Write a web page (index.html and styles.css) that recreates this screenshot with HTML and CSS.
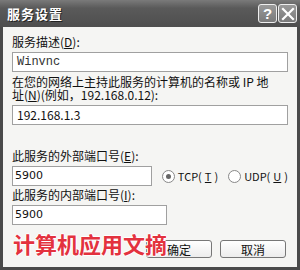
FILE: index.html
```html
<!DOCTYPE html>
<html lang="zh-CN">
<head>
    <meta charset="UTF-8">
    <title>服务设置</title>
    <link rel="stylesheet" href="styles.css">
</head>
<body>

    <div class="window">
        <div class="titlebar">
            <span class="title">服务设置</span>
            <div class="caption-buttons">
                <span class="cap-btn">?</span>
                <span class="cap-btn close">
                    <svg width="14" height="14" viewBox="0 0 14 14">
                        <path d="M2 2 L12 12 M12 2 L2 12" stroke="#fff" stroke-width="2.2" stroke-linecap="square"/>
                    </svg>
                </span>
            </div>
        </div>

        <div class="content">
            <div class="label">服务描述(<u>D</u>):</div>
            <div class="field wide mono">Winvnc</div>

            <div class="label two-line">在您的网络上主持此服务的计算机的名称或 IP 地</div>
            <div class="label second-line">址(<u>N</u>)(例如，192.168.0.12):</div>
            <div class="field wide">192.168.1.3</div>

            <div class="label gap-top">此服务的外部端口号(<u>E</u>):</div>
            <div class="port-row">
                <div class="field short sans">5900</div>
                <label class="radio"><span class="dot checked"></span>TCP(<u>T</u>)</label>
                <label class="radio"><span class="dot"></span>UDP(<u>U</u>)</label>
            </div>

            <div class="label">此服务的内部端口号(<u>I</u>):</div>
            <div class="field short sans">5900</div>

            <div class="button-row">
                <button class="btn">确定</button>
                <button class="btn">取消</button>
            </div>

            <!-- watermark sits over the ok button -->
            <div class="watermark">计算机应用文摘</div>
        </div>
    </div>

</body>
</html>
```

FILE: styles.css
```css
body {
    margin: 0;
    padding: 0;
    background-color: #fff;
    font-family: "Noto Sans CJK SC", sans-serif;
}

.window {
    width: 300px;
    height: 270px;
    box-sizing: border-box;
    background-color: #4a4a4a;
    padding: 0 3px 3px 3px;
    display: flex;
    flex-direction: column;
}

.titlebar {
    height: 27px;
    display: flex;
    align-items: center;
    justify-content: space-between;
    background: linear-gradient(#7a7a7a, #5a5a5a 30%, #4e4e4e);
    margin: 0 -3px;
    padding: 0 3px 0 7px;
}

.title {
    color: #fff;
    font-size: 13px;
    font-weight: bold;
    text-shadow: 1px 1px 0 #222;
    letter-spacing: 1px;
}

.caption-buttons {
    display: flex;
    gap: 1px;
}

.cap-btn {
    width: 19px;
    height: 19px;
    box-sizing: border-box;
    border: 1px solid #eee;
    border-radius: 3px;
    background: linear-gradient(#9a9a9a, #7a7a7a);
    color: #fff;
    font-family: "Liberation Sans", sans-serif;
    font-weight: bold;
    font-size: 15px;
    display: flex;
    align-items: center;
    justify-content: center;
}

.content {
    flex: 1;
    position: relative;
    background-color: #f5f5f3;
    padding: 7px 9px 0 9px;
    font-size: 12px;
    color: #111;
}

.label {
    line-height: 16px;
    margin-bottom: 2px;
}

.two-line {
    margin-top: 2px;
    height: 13px;
    line-height: 15px;
    margin-bottom: 0;
}

.second-line {
    height: 13px;
    line-height: 15px;
    margin-bottom: 5px;
}

.gap-top {
    margin-top: 23px;
}

.field {
    height: 20px;
    box-sizing: border-box;
    border: 1px solid #a0a0a0;
    background-color: #fff;
    padding: 0 4px;
    line-height: 18px;
    font-size: 12px;
}

.wide {
    width: 276px;
}

.short {
    width: 155px;
}

.mono {
    font-family: "Liberation Mono", monospace;
    font-size: 12px;
    color: #333;
}

.sans {
    font-family: "DejaVu Sans", sans-serif;
    font-size: 11px;
    padding-left: 2px;
}

.port-row {
    display: flex;
    align-items: center;
    margin-bottom: 1px;
}

.radio {
    display: flex;
    align-items: center;
    gap: 3px;
    font-size: 11px;
    margin-left: 10px;
}

.dot {
    width: 13px;
    height: 13px;
    box-sizing: border-box;
    border: 1px solid #888;
    border-radius: 50%;
    background-color: #fff;
    position: relative;
}

.dot.checked::after {
    content: "";
    position: absolute;
    left: 3px;
    top: 3px;
    width: 5px;
    height: 5px;
    border-radius: 50%;
    background-color: #666;
}

.button-row {
    display: flex;
    justify-content: flex-end;
    gap: 8px;
    margin-top: 15px;
    padding-right: 2px;
}

.btn {
    width: 66px;
    height: 18px;
    border: 1px solid #777;
    border-radius: 3px;
    background: linear-gradient(#fff, #ececec);
    font-family: "Noto Sans CJK SC", sans-serif;
    font-size: 12px;
    padding: 0;
    color: #111;
}

.watermark {
    position: absolute;
    left: 10px;
    bottom: 11px;
    color: #e3323e;
    font-size: 22px;
    font-weight: bold;
    line-height: 26px;
    text-shadow: 1px 0 0 #fff, -1px 0 0 #fff, 0 1px 0 #fff, 0 -1px 0 #fff;
}
```
